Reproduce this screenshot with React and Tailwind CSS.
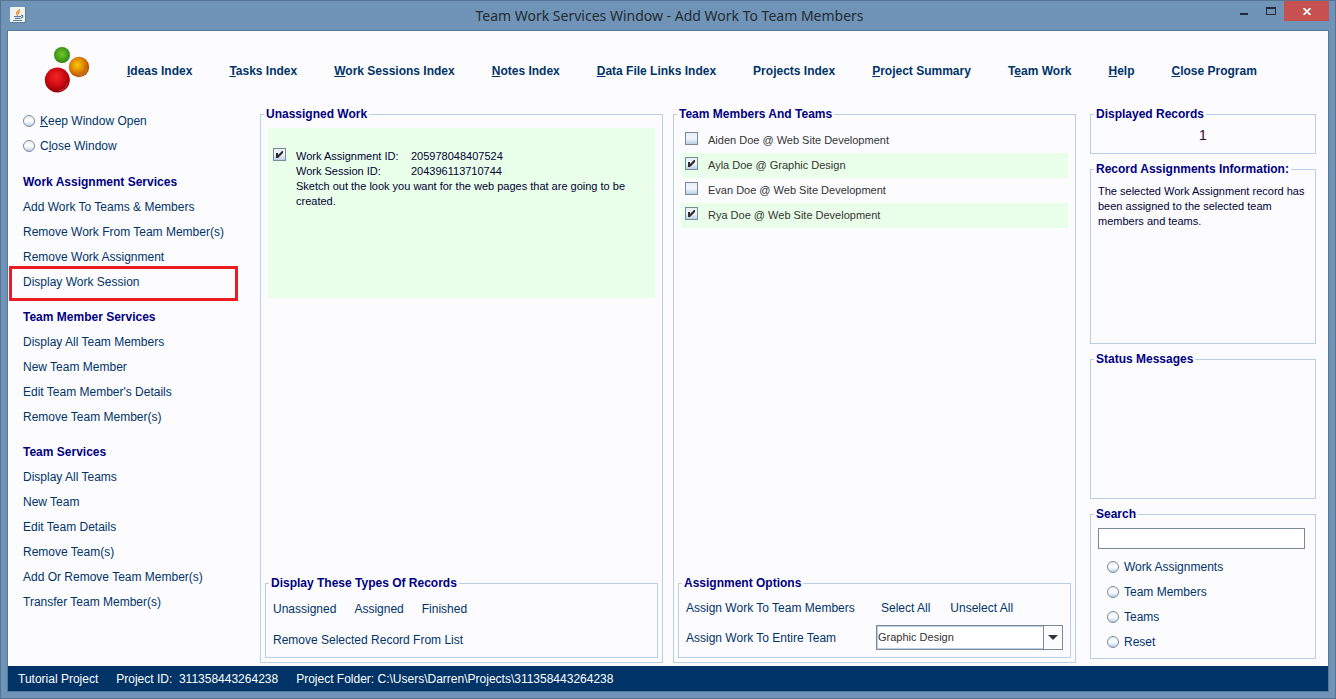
import React, { useState } from 'react';

const NAV_LINKS = [
  { before: '', key: 'I', after: 'deas Index' },
  { before: '', key: 'T', after: 'asks Index' },
  { before: '', key: 'W', after: 'ork Sessions Index' },
  { before: '', key: 'N', after: 'otes Index' },
  { before: '', key: 'D', after: 'ata File Links Index' },
  { before: 'Pro', key: 'j', after: 'ects Index' },
  { before: '', key: 'P', after: 'roject Summary' },
  { before: 'T', key: 'e', after: 'am Work' },
  { before: '', key: 'H', after: 'elp' },
  { before: '', key: 'C', after: 'lose Program' },
];

const SERVICES = [
  {
    title: 'Work Assignment Services',
    items: [
      'Add Work To Teams & Members',
      'Remove Work From Team Member(s)',
      'Remove Work Assignment',
      'Display Work Session',
    ],
  },
  {
    title: 'Team Member Services',
    items: [
      'Display All Team Members',
      'New Team Member',
      "Edit Team Member's Details",
      'Remove Team Member(s)',
    ],
  },
  {
    title: 'Team Services',
    items: [
      'Display All Teams',
      'New Team',
      'Edit Team Details',
      'Remove Team(s)',
      'Add Or Remove Team Member(s)',
      'Transfer Team Member(s)',
    ],
  },
];

const HIGHLIGHTED = 'Display Work Session';

const MEMBERS = [
  { name: 'Aiden Doe @ Web Site Development', selected: false },
  { name: 'Ayla Doe @ Graphic Design', selected: true },
  { name: 'Evan Doe @ Web Site Development', selected: false },
  { name: 'Rya Doe @ Web Site Development', selected: true },
];

const SEARCH_OPTIONS = ['Work Assignments', 'Team Members', 'Teams', 'Reset'];

function JavaIcon() {
  return (
    <svg width="16" height="16" viewBox="0 0 16 16" aria-hidden="true">
      <rect x="0" y="0" width="16" height="16" rx="1" fill="#5f7c97" />
      <rect x="0" y="0" width="15" height="15" rx="1" fill="#f1f1f0" />
      <path d="M9.500 2C10 4 6 4.500 6.500 6.500 6.700 7.500 8 8 7.500 9M10 4.500C8 5.500 8 6 8.800 7.200" fill="none" stroke="#ea8a2f" strokeWidth="1.300" />
      <path d="M4 9.500h7M5 11.300h5.500M3 13.500h9M11 8.500c2.500-.5 2.500 1.800 0 2.500" fill="none" stroke="#54809f" strokeWidth="1.200" />
    </svg>
  );
}

function Logo() {
  return (
    <svg width="46" height="48" viewBox="0 0 46 48" aria-hidden="true">
      <defs>
        <radialGradient id="green" cx="48%" cy="45%" r="55%">
          <stop offset="0" stopColor="#74c42e" />
          <stop offset="0.600" stopColor="#4aa51a" />
          <stop offset="1" stopColor="#2f7d10" />
        </radialGradient>
        <radialGradient id="orange" cx="42%" cy="40%" r="60%">
          <stop offset="0" stopColor="#f9cb00" />
          <stop offset="0.550" stopColor="#dd8504" />
          <stop offset="1" stopColor="#b04c00" />
        </radialGradient>
        <radialGradient id="red" cx="45%" cy="38%" r="60%">
          <stop offset="0" stopColor="#f5262a" />
          <stop offset="0.550" stopColor="#cf0d12" />
          <stop offset="1" stopColor="#960005" />
        </radialGradient>
      </defs>
      <circle cx="18" cy="9" r="8" fill="url(#green)" />
      <circle cx="35" cy="21" r="10.200" fill="url(#orange)" />
      <path d="M43 23.500a8.500 8.500 0 0 1-8 6" fill="none" stroke="#dd9a50" strokeWidth="0.700" />
      <circle cx="13.300" cy="34" r="12.500" fill="url(#red)" />
      <path d="M23.500 37a11 11 0 0 1-8.500 8" fill="none" stroke="#dc5050" strokeWidth="0.700" />
    </svg>
  );
}

function TitleBar() {
  return (
    <header className="flex h-[29px] items-start">
      <div className="flex flex-1 pl-[3px] pt-[6px]">
        <JavaIcon />
      </div>
      <h1 className="pt-[5px] font-['Noto_Sans',sans-serif] text-[14px] leading-5 text-[#252b31]">
        Team Work Services Window - Add Work To Team Members
      </h1>
      <div className="flex flex-1 justify-end">
        <button type="button" aria-label="Minimize" className="flex h-5 w-[27px] items-center justify-center">
          <svg width="8" height="12" viewBox="0 0 8 12" aria-hidden="true">
            <rect x="0" y="8" width="8" height="2" fill="#222b33" />
          </svg>
        </button>
        <button type="button" aria-label="Maximize" className="flex h-5 w-[27px] items-center justify-center">
          <svg width="10" height="8" viewBox="0 0 10 8" aria-hidden="true">
            <path d="M0 0h10v8H0zM1 2v5h8V2z" fill="#222b33" fillRule="evenodd" />
          </svg>
        </button>
        <button type="button" aria-label="Close" className="flex h-5 w-[45px] items-center justify-center bg-[#c75050]">
          <svg width="8" height="7" viewBox="0 0 8 7" aria-hidden="true">
            <path d="M0.500 0l7 7M7.500 0l-7 7" stroke="#fff" strokeWidth="1.800" />
          </svg>
        </button>
      </div>
    </header>
  );
}

function Radio({ name, children }) {
  return (
    <label className="flex h-[25px] items-center gap-[5px] text-[12px] leading-[15px] text-[#003366]">
      <input
        type="radio"
        name={name}
        className="size-3 appearance-none rounded-full border border-[#7a8a99] bg-linear-to-b from-[#e6eef6] via-white to-[#b8cfe5] checked:border-4"
      />
      <span className="pt-0.5">{children}</span>
    </label>
  );
}

function CheckBox({ id, label, checked, onChange }) {
  return (
    <span className="grid size-[13px] shrink-0">
      <input
        id={id}
        type="checkbox"
        aria-label={label}
        checked={checked}
        onChange={onChange}
        className="col-start-1 row-start-1 size-[13px] appearance-none border border-[#7a8a99] bg-linear-to-b from-[#e6eef6] via-[#f2f6fb] to-[#b8cfe5]"
      />
      {checked && (
        <svg className="pointer-events-none col-start-1 row-start-1" width="13" height="13" viewBox="0 0 13 13" aria-hidden="true">
          <path d="M3 5h2v2L9 3h1v2L5 10H3z" fill="#2b2b2b" />
        </svg>
      )}
    </span>
  );
}

function Panel({ title, className, bodyClassName = '', children }) {
  return (
    <fieldset className={`flex min-w-0 flex-col border border-[#b8cfe5] ${className}`}>
      <legend className="ml-[3px] px-[2px] text-[12px] font-bold leading-[13px] text-[#000080]">{title}</legend>
      <div className={`flex flex-1 flex-col ${bodyClassName}`}>{children}</div>
    </fieldset>
  );
}

function ActionButton({ onClick, children }) {
  return (
    <button type="button" onClick={onClick} className="block pt-0.5 text-left text-[12px] leading-[15px] text-[#003366]">
      {children}
    </button>
  );
}

function Sidebar() {
  return (
    <aside className="w-[252px] shrink-0">
      <div className="pb-px pl-[15px]">
        <Radio name="window"><u>K</u>eep Window Open</Radio>
        <Radio name="window">C<u>l</u>ose Window</Radio>
      </div>
      {SERVICES.map((group) => (
        <section key={group.title} className="pt-[10px]">
          <h2 className="h-[25px] pl-[15px] pt-0.5 text-[12px] font-bold leading-[23px] text-[#000080]">{group.title}</h2>
          <ul>
            {group.items.map((item) => (
              <li key={item} className="relative flex h-[25px] items-center pl-[15px]">
                <ActionButton>{item}</ActionButton>
                {item === HIGHLIGHTED && (
                  <span className="pointer-events-none absolute left-px -top-[3px] h-[35px] w-[229px] border-3 border-[#ed1c24]" />
                )}
              </li>
            ))}
          </ul>
        </section>
      ))}
    </aside>
  );
}

function UnassignedWork() {
  const [checked, setChecked] = useState(true);

  return (
    <Panel title="Unassigned Work" className="flex-1" bodyClassName="px-1 pb-1">
      <div className="mx-[3px] mt-[7px] flex h-[170px] gap-[10px] bg-[#eaffea] pl-[5px] pt-5">
        <CheckBox
          id="work-record"
          label="Work Assignment 205978048407524"
          checked={checked}
          onChange={() => setChecked(!checked)}
        />
        <div className="pr-5 pt-px text-[11px] leading-[15px] text-[#000033]">
          <dl className="grid grid-cols-[115px_1fr]">
            <dt>Work Assignment ID:</dt>
            <dd>205978048407524</dd>
            <dt>Work Session ID:</dt>
            <dd>204396113710744</dd>
          </dl>
          <p>Sketch out the look you want for the web pages that are going to be created.</p>
        </div>
      </div>
      <Panel
        title="Display These Types Of Records"
        className="mt-auto h-[81px]"
        bodyClassName="gap-[14px] pl-[7px] pt-[10px]"
      >
        <div className="flex gap-[18px]">
          <ActionButton>Unassigned</ActionButton>
          <ActionButton>Assigned</ActionButton>
          <ActionButton>Finished</ActionButton>
        </div>
        <ActionButton>Remove Selected Record From List</ActionButton>
      </Panel>
    </Panel>
  );
}

function TeamMembers() {
  const [members, setMembers] = useState(MEMBERS);

  const setAll = (selected) => setMembers(members.map((m) => ({ ...m, selected })));
  const toggle = (name) =>
    setMembers(members.map((m) => (m.name === name ? { ...m, selected: !m.selected } : m)));

  return (
    <Panel title="Team Members And Teams" className="flex-1" bodyClassName="px-1 pb-1">
      <ul className="mx-[3px] mt-[7px]">
        {members.map((member, i) => (
          <li
            key={member.name}
            className={`flex h-[25px] items-start gap-[10px] pl-1 pt-1 ${member.selected ? 'bg-[#eaffea]' : ''}`}
          >
            <CheckBox
              id={`member-${i}`}
              checked={member.selected}
              onChange={() => toggle(member.name)}
            />
            <label htmlFor={`member-${i}`} className="text-[11px] leading-[17px] text-[#333333]">
              {member.name}
            </label>
          </li>
        ))}
      </ul>
      <Panel
        title="Assignment Options"
        className="mt-auto h-[81px]"
        bodyClassName="gap-[9px] px-[7px] pt-[9px]"
      >
        <div className="flex">
          <div className="w-[195px]">
            <ActionButton>Assign Work To Team Members</ActionButton>
          </div>
          <div className="flex gap-5">
            <ActionButton onClick={() => setAll(true)}>Select All</ActionButton>
            <ActionButton onClick={() => setAll(false)}>Unselect All</ActionButton>
          </div>
        </div>
        <div className="flex items-center">
          <label htmlFor="entire-team" className="w-[190px] pt-0.5 text-[12px] leading-[15px] text-[#003366]">
            Assign Work To Entire Team
          </label>
          <div className="grid flex-1 grid-cols-[1fr_19px] border border-[#7a8a99]">
            <select
              id="entire-team"
              className="col-span-2 col-start-1 row-start-1 h-[23px] appearance-none border border-[#b8cfe5] bg-white text-[11px] text-[#333333]"
            >
              <option>Graphic Design</option>
              <option>Web Site Development</option>
            </select>
            <span className="pointer-events-none col-start-2 row-start-1 flex items-center justify-center border-l border-[#7a8a99] bg-[#fcfcff]">
              <svg width="10" height="5" viewBox="0 0 10 5" aria-hidden="true">
                <path d="M0 0h10L5 5z" fill="#333" />
              </svg>
            </span>
          </div>
        </div>
      </Panel>
    </Panel>
  );
}

function InfoColumn() {
  return (
    <aside className="ml-[14px] flex w-[226px] shrink-0 flex-col pb-1">
      <Panel title="Displayed Records" className="h-[46px]">
        <p className="pt-[7px] text-center text-[14px] leading-[15px] text-[#330033]">1</p>
      </Panel>
      <Panel title="Record Assignments Information:" className="mt-[9px] h-[181px]" bodyClassName="px-[7px] pt-2">
        <p className="text-[11px] leading-[15px] text-[#000033]">
          The selected Work Assignment record has been assigned to the selected team members and teams.
        </p>
      </Panel>
      <Panel title="Status Messages" className="mt-[9px] min-h-[146px] flex-1" />
      <Panel title="Search" className="mt-[9px] h-[151px]" bodyClassName="px-[7px] pt-[7px]">
        <div className="pr-[3px]">
          <input
            type="text"
            aria-label="Search"
            className="block h-[21px] w-full border border-[#7a8a99] bg-white px-1 text-[12px]"
          />
        </div>
        <div className="pl-[9px] pt-[5px]">
          {SEARCH_OPTIONS.map((option) => (
            <Radio key={option} name="search">{option}</Radio>
          ))}
        </div>
      </Panel>
    </aside>
  );
}

export default function App() {
  return (
    <div className="flex min-h-screen flex-col border border-[#55748f] bg-[#6f94b7] px-[6px] pb-[6px] font-['Liberation_Sans',Arial,sans-serif]">
      <TitleBar />
      <div className="flex flex-1 flex-col border border-[#56799a] bg-[#fcfcff]">
        <nav className="flex h-[77px] items-center pl-[36px]">
          <Logo />
          <ul className="flex gap-[37px] pl-[37px] pt-[3px] text-[12px] font-bold leading-[15px] text-[#003366]">
            {NAV_LINKS.map((link) => (
              <li key={link.before + link.key + link.after}>
                <a href="#" className="whitespace-nowrap">
                  {link.before}
                  <u>{link.key}</u>
                  {link.after}
                </a>
              </li>
            ))}
          </ul>
        </nav>
        <main className="flex flex-1 pb-[3px] pr-3">
          <Sidebar />
          <div className="flex min-w-0 flex-1 gap-[10px]">
            <UnassignedWork />
            <TeamMembers />
          </div>
          <InfoColumn />
        </main>
        <footer className="flex h-[25px] items-center gap-[18px] bg-[#003366] pl-[10px] pt-0.5 text-[12px] leading-[15px] text-white">
          <span>Tutorial Project</span>
          <span>Project ID:&nbsp; 311358443264238</span>
          <span>Project Folder: C:\Users\Darren\Projects\311358443264238</span>
        </footer>
      </div>
    </div>
  );
}
